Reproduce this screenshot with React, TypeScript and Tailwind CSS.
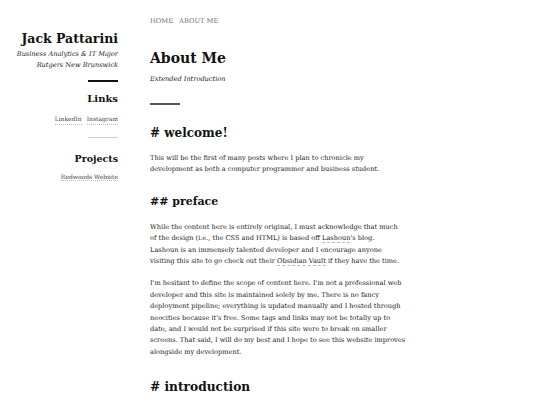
const serif = "font-['DejaVu_Serif',Georgia,serif]"

export default function App() {
  return (
    <div className={`min-h-screen bg-white text-[#222] ${serif}`}>
      <div className="flex">
        {/* Sidebar */}
        <aside className="w-[118px] shrink-0 flex flex-col items-end text-right pt-[30px]">
          <h1 className="text-[12.5px] font-bold leading-[18px] text-[#111]">Jack Pattarini</h1>
          <p className="italic text-[6.6px] leading-[11px] mt-[1px]">Business Analytics &amp; IT Major</p>
          <p className="italic text-[6.6px] leading-[11px]">Rutgers New Brunswick</p>
          <div className="mt-[9px] h-[2px] w-[30px] bg-[#111]" />
          <h2 className="text-[10px] font-bold leading-[14px] mt-[10px] text-[#111]">Links</h2>
          <div className="flex gap-[5px] text-[6px] leading-[10px] mt-[8px] text-[#444]">
            <span className="border-b border-dotted border-[#bbb]">LinkedIn</span>
            <span className="border-b border-dotted border-[#bbb]">Instagram</span>
          </div>
          <div className="mt-[12px] h-px w-[30px] bg-[#ccc]" />
          <h2 className="text-[9.5px] font-bold leading-[14px] mt-[14px] text-[#111]">Projects</h2>
          <div className="text-[6px] leading-[10px] mt-[6px] text-[#444]">
            <span className="border-b border-dotted border-[#bbb]">Redwoods Website</span>
          </div>
        </aside>

        {/* Main */}
        <main className="ml-[32px] w-[290px] pt-[16px]">
          <nav className="flex gap-[6px] text-[6.7px] leading-[10px] text-[#6b7280]">
            <span>HOME</span>
            <span>ABOUT ME</span>
          </nav>
          <h1 className="text-[14px] font-bold leading-[20px] mt-[22px] text-[#111]">About Me</h1>
          <p className="italic text-[6.6px] leading-[10px] mt-[6px]">Extended Introduction</p>
          <div className="mt-[19px] h-[2px] w-[30px] bg-[#555]" />

          <h2 className="text-[12px] font-bold leading-[16px] mt-[20px] text-[#111]"># welcome!</h2>
          <p className="text-[6.6px] leading-[11.4px] mt-[12px]">
            This will be the first of many posts where I plan to chronicle my
            <br />
            development as both a computer programmer and business student.
          </p>

          <h2 className="text-[11px] font-bold leading-[16px] mt-[18px] text-[#111]">## preface</h2>
          <p className="text-[6.6px] leading-[11.4px] mt-[12px]">
            While the content here is entirely original, I must acknowledge that much
            <br />
            of the design (i.e., the CSS and HTML) is based off{" "}
            <span className="border-b border-dashed border-[#bbb]">Lashoun</span>'s blog.
            <br />
            Lashoun is an immensely talented developer and I encourage anyone
            <br />
            visiting this site to go check out their{" "}
            <span className="border-b border-dashed border-[#bbb]">Obsidian Vault</span> if they have the time.
          </p>
          <p className="text-[6.6px] leading-[11.4px] mt-[11px]">
            I'm hesitant to define the scope of content here. I'm not a professional web
            <br />
            developer and this site is maintained solely by me. There is no fancy
            <br />
            deployment pipeline; everything is updated manually and I hosted through
            <br />
            neocities because it's free. Some tags and links may not be totally up to
            <br />
            date, and I would not be surprised if this site were to break on smaller
            <br />
            screens. That said, I will do my best and I hope to see this website improves
            <br />
            alongside my development.
          </p>

          <h2 className="text-[12.2px] font-bold leading-[16px] mt-[21px] text-[#111]"># introduction</h2>
        </main>
      </div>
    </div>
  )
}
